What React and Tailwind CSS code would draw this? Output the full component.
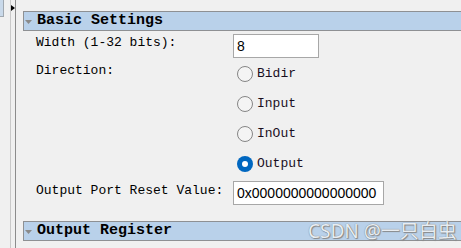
const mono = "font-['Liberation_Mono',monospace]";

const SectionHeader = ({ title }) => (
  <div className="h-[20px] flex items-center border-y border-l border-[#8e9093] bg-[#b9d1ea]">
    <svg width="7" height="4" viewBox="0 0 7 4" className="ml-[1px] mt-[1px]">
      <path d="M0 0 L7 0 L3.5 4 Z" fill="#8a8a8a" />
    </svg>
    <span className={`${mono} ml-[5px] text-[15px] leading-[18px] font-bold text-black`}>{title}</span>
  </div>
);

const Radio = ({ label, checked }) => (
  <div className="h-[30px] flex items-center pl-[4px] pt-[1px]">
    {checked ? (
      <span className="w-[16px] h-[16px] rounded-full bg-[#0067c0] flex items-center justify-center">
        <span className="w-[6px] h-[6px] rounded-full bg-white" />
      </span>
    ) : (
      <span className="w-[16px] h-[16px] rounded-full border border-[#858585] bg-[#f4f4f4]" />
    )}
    <span className={`${mono} ml-[4px] text-[13px] leading-[16px] text-[#1a0f1f]`}>{label}</span>
  </div>
);

const TextBox = ({ value, width }) => (
  <div className={`${width} h-[24px] bg-white border border-[#a7a7a7] flex items-center pl-[3px]`}>
    <span className="font-['Liberation_Sans',sans-serif] text-[14px] leading-[16px] text-black">{value}</span>
  </div>
);

export default function App() {
  return (
    <div className="relative w-[461px] h-[248px] bg-[#f0f0f0] flex overflow-hidden">
      {/* left splitter */}
      <div className="w-[10px]">
        <div className="w-[4px] h-[17px] bg-[#c9d9ea] border-r border-b border-[#a0a8b0]" />
      </div>
      <div className="w-px bg-[#c9c9c9]" />
      <div className="w-[4px] pt-[5px]">
        <svg width="4" height="6" viewBox="0 0 4 6">
          <path d="M0 0 L4 3 L0 6 Z" fill="#000" />
        </svg>
      </div>
      <div className="w-px bg-[#8c8c8c]" />

      <div className="flex-1 pl-[7px] pt-[11px]">
        <SectionHeader title="Basic Settings" />

        <div className="pl-[13px]">
          <div className="flex mt-[3px]">
            <div className={`${mono} w-[197px] pt-[1px] text-[13px] leading-[16px] text-black`}>Width (1-32 bits):</div>
            <TextBox value="8" width="w-[86px]" />
          </div>

          <div className="flex">
            <div className={`${mono} w-[197px] pt-[5px] text-[13px] leading-[16px] text-black`}>Direction:</div>
            <div className="flex flex-col">
              <Radio label="Bidir" />
              <Radio label="Input" />
              <Radio label="InOut" />
              <Radio label="Output" checked />
            </div>
          </div>

          <div className="flex mt-[3px]">
            <div className={`${mono} w-[197px] pt-[2px] text-[13px] leading-[16px] text-black`}>Output Port Reset Value:</div>
            <TextBox value="0x0000000000000000" width="w-[151px]" />
          </div>
        </div>

        <div className="mt-[16px]">
          <SectionHeader title="Output Register" />
        </div>
      </div>

      {/* watermark */}
      <div className="absolute left-[308px] top-[219px] font-['Noto_Sans','Noto_Sans_CJK_SC',sans-serif] text-[19px] leading-[24px] text-[#e8edf2] [text-shadow:0_0_1px_#6b6b6b,1px_1px_1px_#8a8a8a]">
        CSDN @一只白虫
      </div>
    </div>
  );
}
